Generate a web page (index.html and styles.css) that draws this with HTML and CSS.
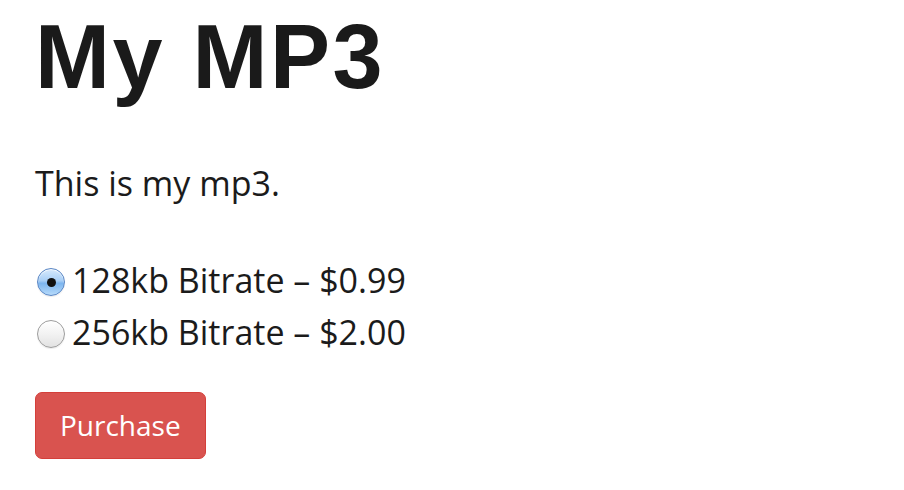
FILE: index.html
```html
<!DOCTYPE html>
<html>
<head>
<meta charset="utf-8">
<link rel="stylesheet" href="styles.css">
</head>
<body>
<div class="page">
  <h1 class="title">My MP3</h1>
  <p class="desc">This is my mp3.</p>
  <form class="options">
    <label class="option"><input class="radio" type="radio" name="rate" checked><span>128kb Bitrate – $0.99</span></label>
    <label class="option"><input class="radio" type="radio" name="rate"><span>256kb Bitrate – $2.00</span></label>
    <button class="buy" type="button">Purchase</button>
  </form>
</div>
</body>
</html>
```
FILE: styles.css
```css
html, body {
  margin: 0;
  padding: 0;
  background: #ffffff;
}
.page {
  padding: 8px 35px 0 35px;
  font-family: "Open Sans", "Liberation Sans", sans-serif;
  color: #1b1b1b;
}
.title {
  font-family: "Liberation Sans", Arial, sans-serif;
  font-weight: bold;
  font-size: 90px;
  line-height: 99px;
  margin: 0 0 51px 0;
  color: #1a1a1a;
  letter-spacing: 2.5px;
}
.desc {
  font-size: 34px;
  line-height: 50px;
  margin: 0 0 47px 0;
}
.options {
  display: flex;
  flex-direction: column;
  align-items: flex-start;
  gap: 2px;
}
.option {
  display: flex;
  align-items: center;
  font-size: 34px;
  line-height: 50px;
  gap: 7px;
}
.radio {
  appearance: none;
  -webkit-appearance: none;
  margin: 4px 0 0 2px;
  width: 28px;
  height: 28px;
  border-radius: 50%;
  border: 1px solid #9c9c9c;
  background: linear-gradient(#ffffff, #f2f2f2 50%, #e2e2e2);
  box-shadow: inset 0 1px 1px rgba(255,255,255,0.9), 0 1px 1px rgba(0,0,0,0.08);
  position: relative;
  flex: none;
}
.radio:checked {
  border-color: #5a86c4;
  background: linear-gradient(#d7eafd, #a9cff6 45%, #7db6f0 55%, #b6dafa);
}
.radio:checked::after {
  content: "";
  position: absolute;
  left: 50%;
  top: 50%;
  width: 9px;
  height: 9px;
  margin: -4.5px 0 0 -4.5px;
  border-radius: 50%;
  background: #111;
}
.buy {
  margin-top: 33px;
  font-family: "Open Sans", "Liberation Sans", sans-serif;
  font-size: 28px;
  line-height: 39px;
  padding: 13px 24px;
  color: #ffffff;
  background: #d9534f;
  border: 1px solid #d43f3a;
  border-radius: 7px;
}
```
